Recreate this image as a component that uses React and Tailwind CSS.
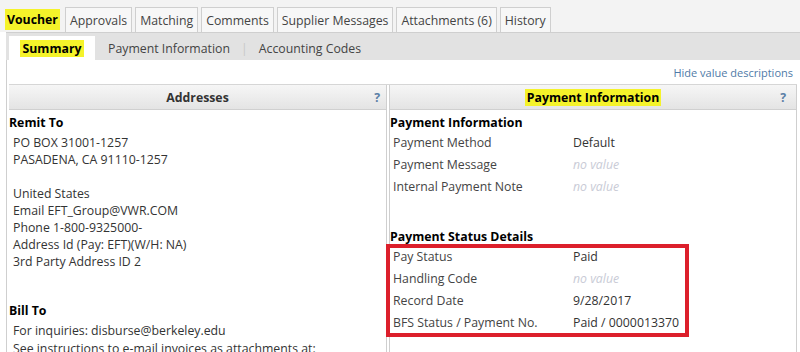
import React from 'react';

const tabs = [
  { label: 'Voucher', active: true },
  { label: 'Approvals' },
  { label: 'Matching' },
  { label: 'Comments' },
  { label: 'Supplier Messages' },
  { label: 'Attachments (6)' },
  { label: 'History' },
];

const Row = ({ label, value, empty }) => (
  <div className="flex h-[22px] items-center whitespace-nowrap">
    <span className="w-[183px] shrink-0 pl-[3px] text-[#444]">{label}</span>
    {empty ? (
      <span className="italic text-[#c9cbd6]">no value</span>
    ) : (
      <span className="text-[#333]">{value}</span>
    )}
  </div>
);

const PanelHeader = ({ children, qRight = 'right-[6px]' }) => (
  <div className="relative flex h-[25px] items-center justify-center border-b border-[#d0d0d0] bg-gradient-to-b from-[#f6f6f6] to-[#e4e4e4] font-bold text-[#333]">
    {children}
    <span className={`absolute top-[4px] text-[#5b7fa6] ${qRight}`}>?</span>
  </div>
);

export default function App() {
  return (
    <div className="h-[352px] w-[800px] overflow-hidden bg-white text-[12.3px] leading-[17px] text-[#333]" style={{ fontFamily: '"Open Sans", "Noto Sans", sans-serif' }}>
      {/* Top tabs */}
      <div className="flex items-end gap-[3px] bg-[#f3f3f3] pl-[5px] pt-[7px]">
        {tabs.map((t) => (
          <div
            key={t.label}
            className={
              t.active
                ? 'flex h-[25px] items-center bg-[#f3f3f3] pr-[2px]'
                : 'flex h-[25px] items-center border border-b-0 border-[#cfcfcf] bg-[#f7f7f7] px-[4px] text-[#444]'
            }
          >
            {t.active ? (
              <span className="bg-[#f5f32a] px-[2px] py-[2px] font-bold text-black">{t.label}</span>
            ) : (
              t.label
            )}
          </div>
        ))}
      </div>

      {/* Sub tabs */}
      <div className="ml-[6px] flex h-[28px] items-end border-t border-[#cfcfcf] bg-[#e2e2e2] pl-[3px]">
        <div className="flex h-[24px] w-[86px] items-center justify-center bg-white">
          <span className="bg-[#f5f32a] px-[2px] font-bold text-black">Summary</span>
        </div>
        <div className="flex h-[24px] items-center pl-[13px] text-[#444]">
          Payment Information
          <span className="mx-[11px] text-[#c8c8c8]">|</span>
          Accounting Codes
        </div>
      </div>

      {/* Content */}
      <div className="ml-[6px] border-l border-[#cfcfcf] pr-[3px]">
        <div className="flex h-[24px] items-center justify-end pr-[4px] text-[11px] text-[#4f7aa8]">Hide value descriptions</div>
        <div className="ml-[2px] grid grid-cols-[378px_1fr] border-t border-[#d6d6d6]">
          {/* Addresses */}
          <div className="border-r border-[#cfcfcf]">
            <PanelHeader>Addresses</PanelHeader>
            <div className="pt-[4px]">
              <div className="font-bold text-black">Remit To</div>
              <div className="mt-[3px] pl-[4px] leading-[17px]">
                <div>PO BOX 31001-1257</div>
                <div>PASADENA, CA 91110-1257</div>
                <div className="h-[17px]" />
                <div>United States</div>
                <div>Email EFT_Group@VWR.COM</div>
                <div>Phone 1-800-9325000-</div>
                <div>Address Id (Pay: EFT)(W/H: NA)</div>
                <div>3rd Party Address ID 2</div>
              </div>
              <div className="mt-[32px] font-bold text-black">Bill To</div>
              <div className="mt-[3px] pl-[4px] leading-[18px]">
                <div>For inquiries: disburse@berkeley.edu</div>
                <div>See instructions to e-mail invoices as attachments at:</div>
              </div>
            </div>
          </div>

          {/* Payment Information */}
          <div className="ml-[2px] border-l border-r border-[#cfcfcf]">
            <PanelHeader qRight="right-[10px]">
              <span className="bg-[#f5f32a] px-[2px] text-black">Payment Information</span>
            </PanelHeader>
            <div className="pt-[4px]">
              <div className="font-bold text-black">Payment Information</div>
              <div>
                <Row label="Payment Method" value="Default" />
                <Row label="Payment Message" empty />
                <Row label="Internal Payment Note" empty />
              </div>
              <div className="mt-[31px] font-bold text-black">Payment Status Details</div>
              <div className="-ml-[4px] mt-[-1px] h-[93px] w-[303px] border-[4px] border-[#dc1f2b]">
                <div className="-mt-[3px]">
                  <Row label="Pay Status" value="Paid" />
                  <Row label="Handling Code" empty />
                  <Row label="Record Date" value="9/28/2017" />
                  <Row label="BFS Status / Payment No." value="Paid / 0000013370" />
                </div>
              </div>
            </div>
          </div>
        </div>
      </div>
    </div>
  );
}
